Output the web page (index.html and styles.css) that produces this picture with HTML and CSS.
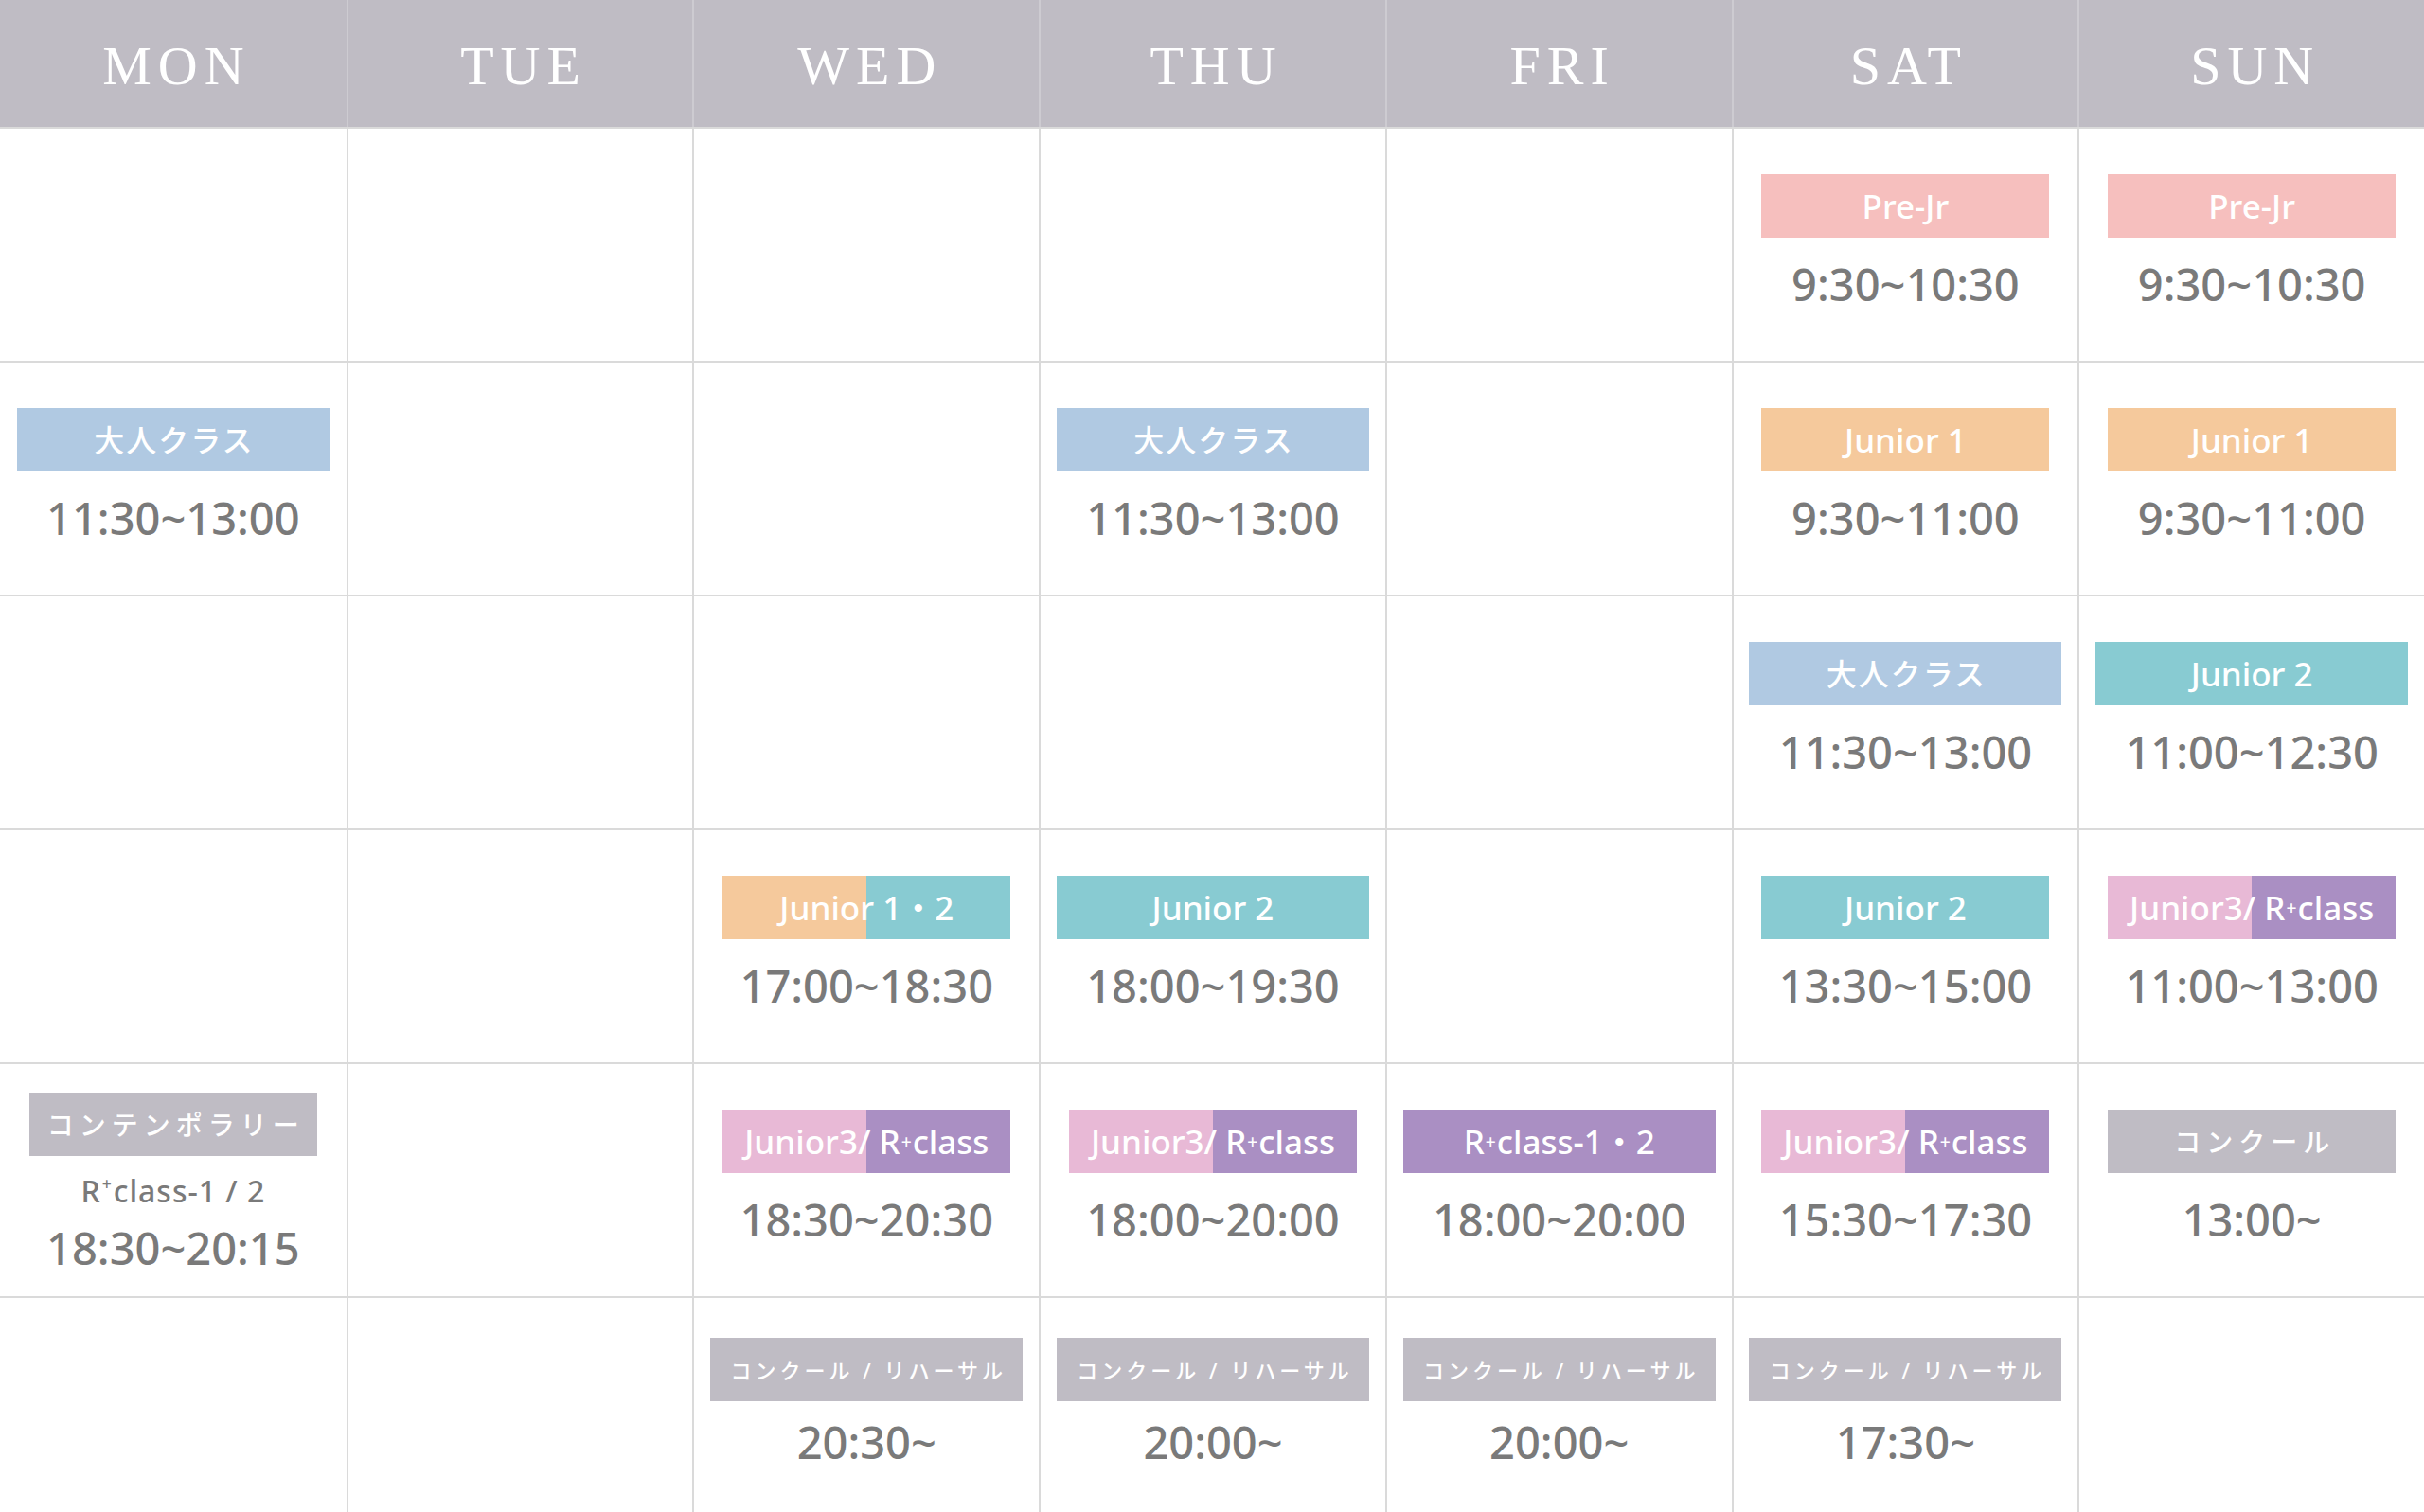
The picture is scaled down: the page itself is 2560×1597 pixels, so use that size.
FILE: index.html
```html
<!DOCTYPE html>
<html lang="ja">
<head>
<meta charset="utf-8">
<title>Timetable</title>
<link rel="stylesheet" href="styles.css">
</head>
<body>
<div class="timetable">
  <div class="day">MON</div>
  <div class="day">TUE</div>
  <div class="day">WED</div>
  <div class="day">THU</div>
  <div class="day">FRI</div>
  <div class="day">SAT</div>
  <div class="day">SUN</div>

  <!-- row 1 -->
  <div class="cell"></div>
  <div class="cell"></div>
  <div class="cell"></div>
  <div class="cell"></div>
  <div class="cell"></div>
  <div class="cell"><div class="badge badge--prejr">Pre-Jr</div><p class="time">9:30~10:30</p></div>
  <div class="cell"><div class="badge badge--prejr">Pre-Jr</div><p class="time">9:30~10:30</p></div>

  <!-- row 2 -->
  <div class="cell"><div class="badge badge--wide badge--adult badge--jp">大人クラス</div><p class="time">11:30~13:00</p></div>
  <div class="cell"></div>
  <div class="cell"></div>
  <div class="cell"><div class="badge badge--wide badge--adult badge--jp">大人クラス</div><p class="time">11:30~13:00</p></div>
  <div class="cell"></div>
  <div class="cell"><div class="badge badge--jr1">Junior 1</div><p class="time">9:30~11:00</p></div>
  <div class="cell"><div class="badge badge--jr1">Junior 1</div><p class="time">9:30~11:00</p></div>

  <!-- row 3 -->
  <div class="cell"></div>
  <div class="cell"></div>
  <div class="cell"></div>
  <div class="cell"></div>
  <div class="cell"></div>
  <div class="cell"><div class="badge badge--wide badge--adult badge--jp">大人クラス</div><p class="time">11:30~13:00</p></div>
  <div class="cell"><div class="badge badge--wide badge--jr2">Junior 2</div><p class="time">11:00~12:30</p></div>

  <!-- row 4 -->
  <div class="cell"></div>
  <div class="cell"></div>
  <div class="cell"><div class="badge badge--jr12">Junior 1・2</div><p class="time">17:00~18:30</p></div>
  <div class="cell"><div class="badge badge--wide badge--jr2">Junior 2</div><p class="time">18:00~19:30</p></div>
  <div class="cell"></div>
  <div class="cell"><div class="badge badge--jr2">Junior 2</div><p class="time">13:30~15:00</p></div>
  <div class="cell"><div class="badge badge--jr3">Junior3/ R<span class="plus">+</span>class</div><p class="time">11:00~13:00</p></div>

  <!-- row 5 -->
  <div class="cell cell--tall"><div class="badge badge--gray badge--kana">コンテンポラリー</div><p class="sub">R<span class="plus">+</span>class-1 / 2</p><p class="time">18:30~20:15</p></div>
  <div class="cell"></div>
  <div class="cell"><div class="badge badge--jr3">Junior3/ R<span class="plus">+</span>class</div><p class="time">18:30~20:30</p></div>
  <div class="cell"><div class="badge badge--jr3">Junior3/ R<span class="plus">+</span>class</div><p class="time">18:00~20:00</p></div>
  <div class="cell"><div class="badge badge--wide badge--rclass">R<span class="plus">+</span>class-1・2</div><p class="time">18:00~20:00</p></div>
  <div class="cell"><div class="badge badge--jr3">Junior3/ R<span class="plus">+</span>class</div><p class="time">15:30~17:30</p></div>
  <div class="cell"><div class="badge badge--gray badge--kana">コンクール</div><p class="time">13:00~</p></div>

  <!-- row 6 -->
  <div class="cell cell--late"></div>
  <div class="cell cell--late"></div>
  <div class="cell cell--late"><div class="badge badge--wide badge--gray badge--small">コンクール / リハーサル</div><p class="time">20:30~</p></div>
  <div class="cell cell--late"><div class="badge badge--wide badge--gray badge--small">コンクール / リハーサル</div><p class="time">20:00~</p></div>
  <div class="cell cell--late"><div class="badge badge--wide badge--gray badge--small">コンクール / リハーサル</div><p class="time">20:00~</p></div>
  <div class="cell cell--late"><div class="badge badge--wide badge--gray badge--small">コンクール / リハーサル</div><p class="time">17:30~</p></div>
  <div class="cell cell--late"></div>
</div>
</body>
</html>
```

FILE: styles.css
```css
* {
  box-sizing: border-box;
  margin: 0;
  padding: 0;
}

html,
body {
  background: #ffffff;
  overflow: hidden;
}

body {
  margin: 0;
  font-family: "Noto Sans", "Noto Sans CJK JP", sans-serif;
}

.timetable {
  display: grid;
  grid-template-columns: repeat(7, 1fr);
  grid-template-rows: 134px repeat(5, 247px) 228px;
  width: 2560px;
}

.day {
  display: flex;
  align-items: center;
  justify-content: center;
  padding-top: 6px;
  padding-left: 7px;
  background: #bfbcc4;
  border-left: 2px solid #cdcbd1;
  color: #ffffff;
  font-family: "Liberation Serif", serif;
  font-size: 58px;
  letter-spacing: 7px;
  line-height: 1;
}

.cell {
  display: flex;
  flex-direction: column;
  align-items: center;
  padding-top: 48px;
  border-top: 2px solid #dadada;
  border-left: 2px solid #dadada;
}

.timetable > :nth-child(7n + 1) {
  border-left: 0;
}

.cell--tall {
  padding-top: 30px;
}

.cell--late {
  padding-top: 42px;
}

.badge {
  display: flex;
  align-items: center;
  justify-content: center;
  flex: none;
  width: 304px;
  height: 67px;
  color: #ffffff;
  font-size: 35px;
  font-weight: 500;
  line-height: 1;
  white-space: nowrap;
}

.badge--wide {
  width: 330px;
}

.badge--jp {
  font-size: 32px;
  letter-spacing: 2px;
  padding-left: 2px;
}

.badge--kana {
  font-size: 28px;
  letter-spacing: 6px;
  padding-left: 6px;
}

.badge--small {
  font-size: 22px;
  letter-spacing: 4px;
  padding-left: 4px;
}

.badge--prejr {
  background: #f6bfbe;
}

.badge--jr1 {
  background: #f5c99c;
}

.badge--adult {
  background: #b0c9e2;
}

.badge--jr2 {
  background: #88cbd2;
}

.badge--jr12 {
  background: linear-gradient(to right, #f5c99c 50%, #88cbd2 50%);
}

.badge--jr3 {
  background: linear-gradient(to right, #e8b9d6 50%, #aa8fc3 50%);
}

.badge--rclass {
  background: #aa8fc3;
}

.badge--gray {
  background: #bfbcc4;
}

.plus {
  font-size: 0.55em;
  line-height: 0;
  vertical-align: 0.75em;
  margin: 0 1px;
}

.time {
  margin-top: 21px;
  color: #7a7a7a;
  font-size: 47px;
  font-weight: 500;
  line-height: 56px;
  white-space: nowrap;
}

.sub {
  margin-top: 18px;
  color: #7a7a7a;
  font-size: 32px;
  font-weight: 500;
  line-height: 38px;
  letter-spacing: 1px;
  white-space: nowrap;
}

.sub + .time {
  margin-top: 13px;
}

.cell--late .time {
  margin-top: 15px;
}
```
